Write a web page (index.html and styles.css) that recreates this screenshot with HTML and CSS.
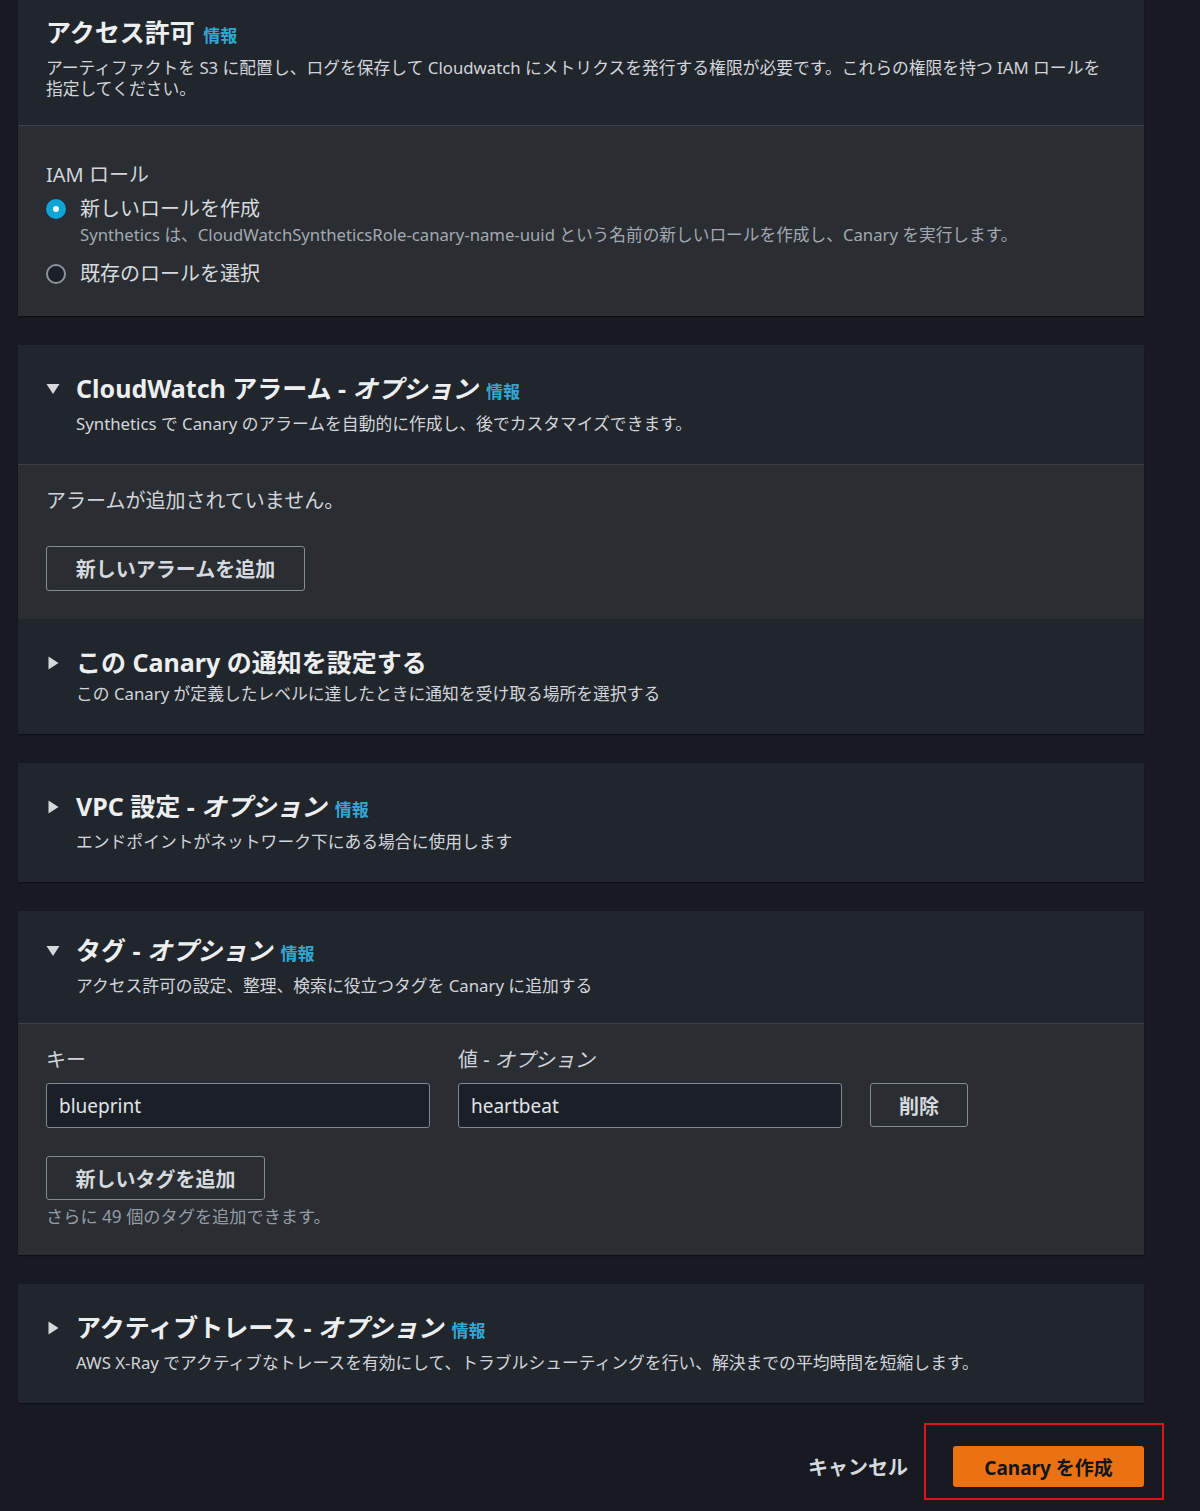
FILE: index.html
```html
<!DOCTYPE html>
<html lang="ja">
    <head>
        <meta charset="UTF-8">
        <meta name="viewport" content="width=device-width, initial-scale=1.0">
        <title>Canary を作成</title>
        <link rel="stylesheet" href="styles.css">
    </head>
    <body>
        <main class="page">
            <section class="panel first">
                <div class="panel-head">
                    <h2 class="title">アクセス許可 <a class="info" href="#">情報</a></h2>
                    <p class="desc">アーティファクトを S3 に配置し、ログを保存して Cloudwatch にメトリクスを発行する権限が必要です。これらの権限を持つ IAM ロールを指定してください。</p>
                </div>
                <div class="panel-body">
                    <div class="field-label">IAM ロール</div>
                    <label class="radio">
                        <span class="dot checked"></span>
                        <span class="radio-text">
                            <span class="radio-label">新しいロールを作成</span>
                            <span class="radio-desc">Synthetics は、CloudWatchSyntheticsRole-canary-name-uuid という名前の新しいロールを作成し、Canary を実行します。</span>
                        </span>
                    </label>
                    <label class="radio second">
                        <span class="dot"></span>
                        <span class="radio-text">
                            <span class="radio-label">既存のロールを選択</span>
                        </span>
                    </label>
                </div>
            </section>

            <section class="panel">
                <div class="panel-head toggle">
                    <svg class="caret" viewBox="0 0 14 14"><path d="M0.5 2 L13.5 2 L7 12 Z"/></svg>
                    <div>
                        <h2 class="title">CloudWatch アラーム - <em>オプション</em> <a class="info" href="#">情報</a></h2>
                        <p class="desc">Synthetics で Canary のアラームを自動的に作成し、後でカスタマイズできます。</p>
                    </div>
                </div>
                <div class="panel-body alarms">
                    <p class="empty">アラームが追加されていません。</p>
                    <button class="btn">新しいアラームを追加</button>
                </div>
                <div class="panel-head toggle">
                    <svg class="caret" viewBox="0 0 14 14"><path d="M2.5 0.5 L12.5 7 L2.5 13.5 Z"/></svg>
                    <div>
                        <h2 class="title">この Canary の通知を設定する</h2>
                        <p class="desc">この Canary が定義したレベルに達したときに通知を受け取る場所を選択する</p>
                    </div>
                </div>
            </section>

            <section class="panel">
                <div class="panel-head toggle">
                    <svg class="caret" viewBox="0 0 14 14"><path d="M2.5 0.5 L12.5 7 L2.5 13.5 Z"/></svg>
                    <div>
                        <h2 class="title">VPC 設定 - <em>オプション</em> <a class="info" href="#">情報</a></h2>
                        <p class="desc">エンドポイントがネットワーク下にある場合に使用します</p>
                    </div>
                </div>
            </section>

            <section class="panel">
                <div class="panel-head toggle tags-head">
                    <svg class="caret" viewBox="0 0 14 14"><path d="M0.5 2 L13.5 2 L7 12 Z"/></svg>
                    <div>
                        <h2 class="title">タグ - <em>オプション</em> <a class="info" href="#">情報</a></h2>
                        <p class="desc">アクセス許可の設定、整理、検索に役立つタグを Canary に追加する</p>
                    </div>
                </div>
                <div class="panel-body tags">
                    <div class="tag-row">
                        <div class="tag-field">
                            <div class="field-label">キー</div>
                            <input class="input" type="text" value="blueprint">
                        </div>
                        <div class="tag-field">
                            <div class="field-label">値 - <em>オプション</em></div>
                            <input class="input" type="text" value="heartbeat">
                        </div>
                        <button class="btn remove">削除</button>
                    </div>
                    <button class="btn add-tag">新しいタグを追加</button>
                    <p class="hint">さらに 49 個のタグを追加できます。</p>
                </div>
            </section>

            <section class="panel">
                <div class="panel-head toggle">
                    <svg class="caret" viewBox="0 0 14 14"><path d="M2.5 0.5 L12.5 7 L2.5 13.5 Z"/></svg>
                    <div>
                        <h2 class="title">アクティブトレース - <em>オプション</em> <a class="info" href="#">情報</a></h2>
                        <p class="desc">AWS X-Ray でアクティブなトレースを有効にして、トラブルシューティングを行い、解決までの平均時間を短縮します。</p>
                    </div>
                </div>
            </section>

            <div class="actions">
                <button class="link-btn">キャンセル</button>
                <div class="highlight">
                    <button class="primary">Canary を作成</button>
                </div>
            </div>
        </main>
    </body>
</html>
```

FILE: styles.css
```css
body {
    margin: 0;
    padding: 0;
    background-color: #171a21;
    font-family: "Noto Sans", "Noto Sans CJK JP", sans-serif;
    color: #d1d5db;
    min-height: 1511px;
}

.page {
    width: 1126px;
    margin-left: 18px;
}

.panel {
    background-color: #21252c;
    margin-bottom: 29px;
    box-shadow: 0 1px 1px #0d0f13;
}

.panel.first {
    margin-top: -11px;
}

.panel-head {
    padding: 27px 28px 30px;
}

.first .panel-head {
    padding-bottom: 26px;
}

.panel-head.toggle {
    display: flex;
    padding-left: 28px;
}

.tags-head.toggle {
    padding-top: 23px;
    padding-bottom: 27px;
}

.caret {
    width: 14px;
    height: 14px;
    fill: #d5d9dd;
    margin-top: 10px;
    margin-right: 16px;
    flex-shrink: 0;
}

.title {
    margin: 0;
    font-size: 25px;
    line-height: 32px;
    font-weight: bold;
    color: #eceef0;
}

.title em,
.field-label em {
    font-style: italic;
}

.info {
    color: #35a6d3;
    font-size: 17px;
    text-decoration: none;
    font-weight: bold;
    margin-left: 2px;
}

.desc {
    margin: 5px 0 0;
    font-size: 16.8px;
    line-height: 21px;
    color: #d1d5db;
}

.panel-body {
    background-color: #2a2d32;
    border-top: 1px solid #3d4047;
    padding: 0 28px 30px;
}

.field-label {
    font-size: 20px;
    line-height: 24px;
    color: #d1d5db;
}

.panel-body > .field-label {
    padding-top: 37px;
}

.radio {
    display: flex;
    align-items: flex-start;
    margin-top: 10px;
}

.radio.second {
    margin-top: 17px;
}

.dot {
    width: 16px;
    height: 16px;
    border: 2px solid #8d949c;
    border-radius: 50%;
    background-color: #1a1f28;
    margin-top: 2px;
    margin-right: 14px;
    flex-shrink: 0;
    position: relative;
}

.dot.checked {
    border-color: #0fa4d6;
    background-color: #0fa4d6;
}

.dot.checked::after {
    content: "";
    position: absolute;
    left: 5px;
    top: 5px;
    width: 6px;
    height: 6px;
    border-radius: 50%;
    background-color: #f2f3f3;
}

.radio-text {
    display: flex;
    flex-direction: column;
}

.radio-label {
    font-size: 20px;
    line-height: 24px;
    color: #d7dadd;
}

.radio-desc {
    margin-top: 3px;
    font-size: 16.7px;
    line-height: 21px;
    color: #a3a9b1;
}

.alarms {
    padding-top: 24px;
    padding-bottom: 28px;
}

.empty {
    margin: 0;
    font-size: 20px;
    line-height: 24px;
}

.btn {
    display: block;
    background: transparent;
    border: 1px solid #858c94;
    border-radius: 3px;
    color: #d5d9dd;
    font-family: inherit;
    font-size: 20px;
    font-weight: bold;
    height: 45px;
    padding: 0;
    cursor: pointer;
}

.alarms .btn {
    margin-top: 33px;
    width: 259px;
}

.tags {
    padding-top: 24px;
    padding-bottom: 28px;
}

.tag-row {
    display: flex;
    align-items: flex-end;
    gap: 28px;
}

.tag-field {
    width: 384px;
}

.input {
    display: block;
    width: 100%;
    box-sizing: border-box;
    margin-top: 11px;
    height: 45px;
    padding: 0 12px;
    background-color: #1a1f28;
    border: 1px solid #7f8790;
    border-radius: 3px;
    color: #e2e4e6;
    font-family: inherit;
    font-size: 19px;
}

.btn.remove {
    width: 98px;
    height: 44px;
    margin-bottom: 1px;
}

.btn.add-tag {
    margin-top: 28px;
    width: 219px;
    height: 44px;
}

.hint {
    margin: 6px 0 0;
    font-size: 17.2px;
    line-height: 21px;
    color: #959ca5;
}

.actions {
    display: flex;
    justify-content: flex-end;
    align-items: center;
    margin-top: 43px;
}

.link-btn {
    background: transparent;
    border: none;
    color: #d5d9dd;
    font-family: inherit;
    font-size: 20px;
    font-weight: bold;
    padding: 0;
    margin-right: 45px;
    cursor: pointer;
}

.highlight {
    position: relative;
}

.highlight::after {
    content: "";
    position: absolute;
    left: -29px;
    right: -20px;
    top: -23px;
    bottom: -13px;
    border: 2px solid #e0131d;
}

.primary {
    display: block;
    width: 191px;
    height: 41px;
    background-color: #ec7211;
    border: none;
    border-radius: 3px;
    color: #10161f;
    font-family: inherit;
    font-size: 19px;
    font-weight: bold;
    cursor: pointer;
}
```
